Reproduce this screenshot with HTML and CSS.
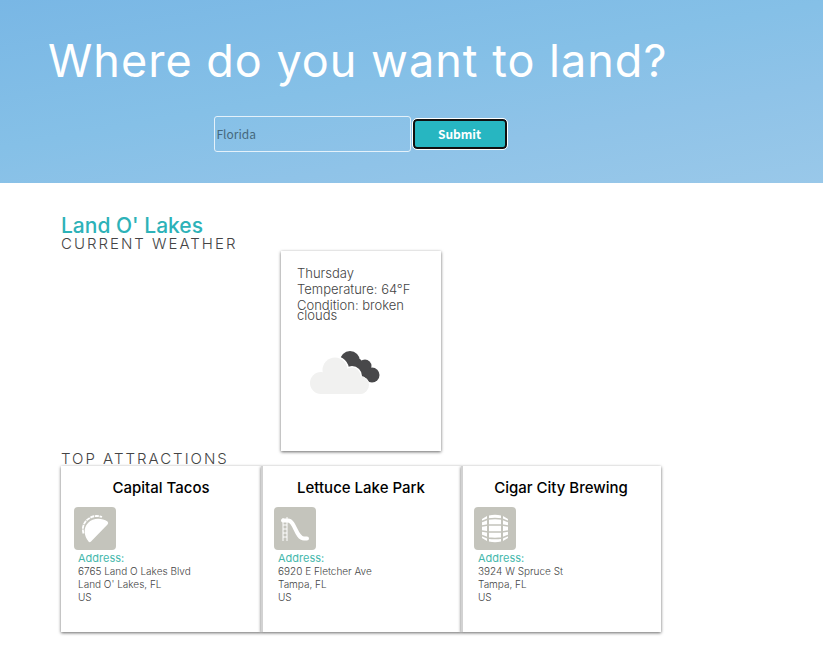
FILE: index.html
```html
<!DOCTYPE html>
<html lang="en">
<head>
<meta charset="utf-8">
<meta name="viewport" content="width=device-width, initial-scale=1">
<title>Where do you want to land?</title>
<link rel="stylesheet" href="styles.css">
</head>
<body>
<header class="hero">
  <h1 class="hero-title">Where do you want to land?</h1>
  <form class="search">
    <input class="search-input" type="text" value="Florida" aria-label="Destination">
    <button class="search-button" type="button">Submit</button>
  </form>
</header>
<main class="content">
  <h2 class="city">Land O' Lakes</h2>
  <section>
    <h3 class="section-title">CURRENT WEATHER</h3>
    <div class="weather-card">
      <p>Thursday</p>
      <p>Temperature: 64°F</p>
      <p>Condition: broken clouds</p>
      <svg class="weather-icon" viewBox="0 0 70 44" aria-hidden="true">
        <g fill="#48484a">
          <circle cx="40" cy="10" r="10"/><circle cx="55" cy="15" r="6.5"/><circle cx="62" cy="24" r="7.5"/>
          <path d="M32 8 50 8 60 18 62 31 45 31z"/>
        </g>
        <g fill="#f1f1f0" stroke="#fff" stroke-width="2">
          <circle cx="25" cy="19" r="13"/><circle cx="42" cy="25" r="9"/><circle cx="50" cy="35" r="9"/>
        </g>
        <g fill="#f1f1f0">
          <circle cx="25" cy="19" r="12.5"/><circle cx="11" cy="32" r="11"/><circle cx="42" cy="25" r="8.5"/><circle cx="50" cy="34" r="9"/>
          <path d="M11 43V25L18 20H36L48 27 55 36 50 43z"/>
        </g>
      </svg>
    </div>
  </section>
  <section>
    <h3 class="section-title">TOP ATTRACTIONS</h3>
    <div class="attractions">
      <article class="attraction">
        <h4>Capital Tacos</h4>
        <svg class="category-icon" viewBox="0 0 42 43" aria-hidden="true">
          <path d="M14.500 34.500C10 29 9 21 14 16 19 10.500 28 11 33.500 14.500Q35 16 33.500 17.500L17 34.500Q15.500 36 14.500 34.500z" fill="#fff"/>
          <path d="M9.500 26.500C7.500 20 10.500 14 15 11.500 19 8.500 24 8.500 28 10" fill="none" stroke="#fff" stroke-width="1.800" stroke-dasharray="4 .7"/>
        </svg>
        <address><strong>Address:</strong><span>6765 Land O Lakes Blvd</span><span>Land O' Lakes, FL</span><span>US</span></address>
      </article>
      <article class="attraction">
        <h4>Lettuce Lake Park</h4>
        <svg class="category-icon" viewBox="0 0 42 43" aria-hidden="true">
          <path d="M9 34V11M13 34V10M9 18h4M9 22h4M9 26h4M9 30h4" fill="none" stroke="#fff" stroke-width="1"/>
          <path d="M9 13.500H14C21 13.500 22 31.500 30 31.500H33" fill="none" stroke="#fff" stroke-width="4" stroke-linecap="round"/>
        </svg>
        <address><strong>Address:</strong><span>6920 E Fletcher Ave</span><span>Tampa, FL</span><span>US</span></address>
      </article>
      <article class="attraction">
        <h4>Cigar City Brewing</h4>
        <svg class="category-icon" viewBox="0 0 42 43" aria-hidden="true">
          <path d="M8 12 13 9V34L8 31zM15 8.500Q21 7 27 8.500V34.500Q21 36 15 34.500zM29 9 34 12V31L29 34z" fill="#fff"/>
          <path d="M8 14.500 14 12Q21 11 28 12L34 14.500M8 19 14 18H28L34 19M8 24 14 25H28L34 24M8 28.500 14 31Q21 32 28 31L34 28.500" fill="none" stroke="#c4c4bc" stroke-width="1.500"/>
        </svg>
        <address><strong>Address:</strong><span>3924 W Spruce St</span><span>Tampa, FL</span><span>US</span></address>
      </article>
    </div>
  </section>
</main>
</body>
</html>
```
FILE: styles.css
```css
* {
  box-sizing: border-box;
}

body,
h1,
h2,
h3,
h4,
p {
  margin: 0;
}

body {
  background: #fff;
  color: #444;
  font-family: Inter, "Open Sans", sans-serif;
}

.hero {
  padding: 36px 48px 31px;
  background: linear-gradient(170deg, #79b7e5 0%, #85c0e7 45%, #8fc3e8 70%, #99c8e9 100%);
}

.hero-title {
  color: #fff;
  font-size: 45px;
  font-weight: 400;
  line-height: 50px;
  letter-spacing: 1px;
}

.search {
  display: flex;
  align-items: center;
  justify-content: center;
  gap: 2px;
  max-width: 600px;
  margin: 30px 0 0 12px;
}

.search-input,
.search-button {
  font-family: "Noto Sans CJK SC", "Open Sans", sans-serif;
  font-size: 12px;
}

.search-input {
  width: 197px;
  height: 36px;
  padding: 0 2px 2px;
  border: 1px solid #e4f1fa;
  border-radius: 3px;
  background: transparent;
  color: #45687d;
}

.search-button {
  width: 94px;
  height: 30px;
  padding: 0 0 2px;
  border: 2px solid #101010;
  border-radius: 4px;
  outline: 1px solid #fff;
  background: #27b6c1;
  color: #fff;
  font-weight: 700;
}

.content {
  max-width: 661px;
  padding: 33px 0 29px 61px;
}

.city {
  color: #2db2b8;
  font-size: 21px;
  font-weight: 500;
  line-height: 20px;
}

.section-title {
  font-size: 15px;
  font-weight: 300;
  line-height: 15px;
  letter-spacing: 2px;
}

.weather-card,
.attraction {
  background: #fff;
  box-shadow: 0 1px 3px rgba(0, 0, 0, 0.6);
}

.weather-card {
  width: 160px;
  min-height: 200px;
  margin: 0 auto;
  padding: 17px 16px 0;
}

.weather-card p {
  margin-bottom: 6px;
  font-size: 13px;
  font-weight: 300;
  line-height: 10px;
}

.weather-icon {
  display: block;
  width: 70px;
  height: 44px;
  margin: 31px 0 0 13px;
}

.attractions {
  display: grid;
  grid-template-columns: repeat(3, 1fr);
}

.attraction {
  min-height: 166px;
  padding: 12px 13px;
}

.attraction + .attraction {
  padding-left: 11px;
  border-left: 2px solid #d2d2d2;
}

.attraction h4 {
  color: #000;
  font-size: 15px;
  font-weight: 500;
  line-height: 20px;
  text-align: center;
}

.category-icon {
  display: block;
  width: 42px;
  height: 43px;
  margin-top: 9px;
  border-radius: 4px;
  background: #c4c4bc;
}

.attraction address {
  display: flex;
  flex-direction: column;
  padding: 2px 4px;
  font-size: 10px;
  font-style: normal;
  font-weight: 300;
  line-height: 13px;
}

.attraction strong {
  color: #45b8ac;
  font-size: 11px;
  font-weight: 400;
}
```
